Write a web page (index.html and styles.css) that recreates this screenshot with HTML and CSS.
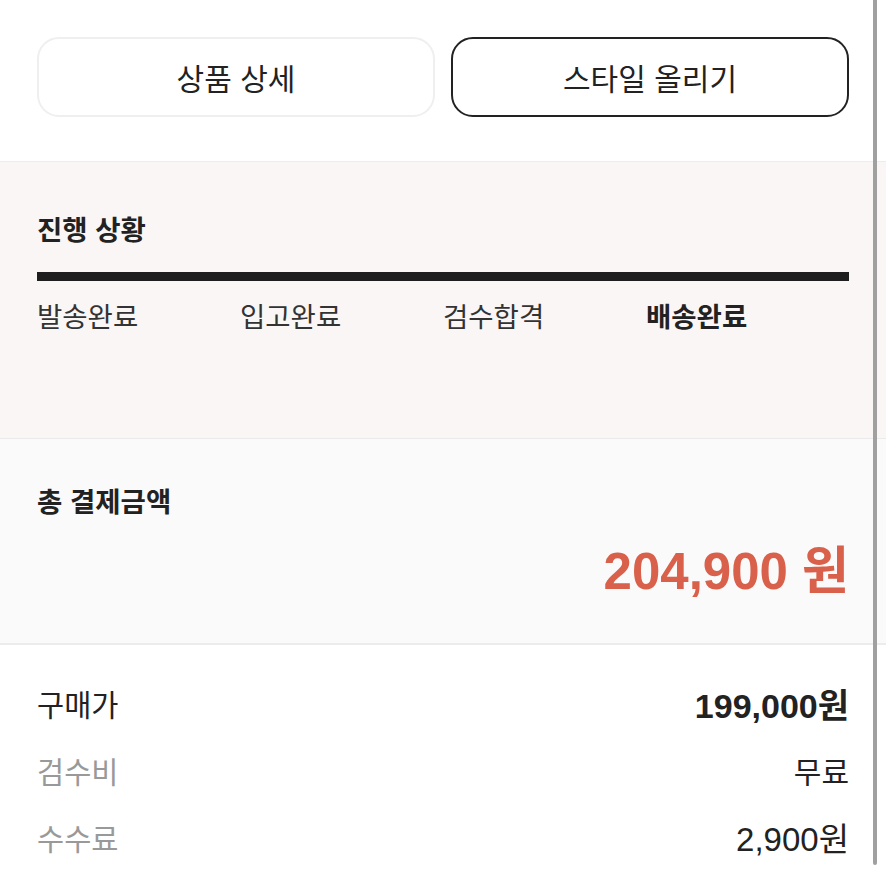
FILE: index.html
```html
<!DOCTYPE html>
<html lang="ko">
<head>
<meta charset="utf-8">
<link rel="stylesheet" href="styles.css">
</head>
<body>
<div class="page">
  <section class="top">
    <button class="btn btn-light">상품 상세</button>
    <button class="btn btn-dark">스타일 올리기</button>
  </section>
  <section class="progress">
    <h2 class="title">진행 상황</h2>
    <div class="bar"></div>
    <div class="steps">
      <span>발송완료</span>
      <span>입고완료</span>
      <span>검수합격</span>
      <span class="current">배송완료</span>
    </div>
  </section>
  <section class="total">
    <h2 class="title">총 결제금액</h2>
    <div class="price">204,900 원</div>
  </section>
  <section class="rows">
    <div class="row"><span class="label">구매가</span><span class="value strong">199,000원</span></div>
    <div class="row"><span class="label muted">검수비</span><span class="value ko">무료</span></div>
    <div class="row"><span class="label muted">수수료</span><span class="value">2,900원</span></div>
  </section>
</div>
<div class="scrollbar"></div>
</body>
</html>
```
FILE: styles.css
```css
html, body {
  margin: 0;
  padding: 0;
  background: #ffffff;
  height: 886px;
  overflow: hidden;
}
body {
  font-family: "Noto Sans CJK KR", "Noto Sans", sans-serif;
  color: #222;
}
.page {
  width: 886px;
}
.top {
  display: flex;
  gap: 16px;
  padding: 37px 37px 44px 37px;
  border-bottom: 1px solid #efecec;
}
.btn {
  flex: 1;
  height: 80px;
  border-radius: 22px;
  background: #fff;
  font-family: inherit;
  font-size: 30px;
  color: #222;
  box-sizing: border-box;
  padding: 0;
}
.btn-light {
  border: 2px solid #efefef;
}
.btn-dark {
  border: 2px solid #222;
}
.progress {
  background: #faf6f5;
  padding: 48px 37px 105px 37px;
  border-bottom: 1px solid #ebebeb;
}
.title {
  margin: 0;
  font-size: 27.5px;
  line-height: 36px;
  font-weight: 700;
  color: #222;
}
.bar {
  margin-top: 26px;
  height: 9px;
  background: #1e1e1e;
}
.steps {
  margin-top: 16px;
  display: grid;
  grid-template-columns: repeat(4, 1fr);
  font-size: 27.5px;
  line-height: 36px;
  color: #333;
}
.steps .current {
  font-weight: 700;
  color: #222;
}
.total {
  background: #fafafa;
  padding: 43px 37px 41px 37px;
  border-bottom: 2px solid #ececec;
}
.price {
  margin-top: 24px;
  text-align: right;
  font-family: "Liberation Sans", "Noto Sans CJK KR", sans-serif;
  font-size: 51px;
  line-height: 60px;
  font-weight: 700;
  color: #d9604b;
}
.rows {
  padding: 38px 37px 0 37px;
  display: flex;
  flex-direction: column;
  gap: 27px;
}
.row {
  display: flex;
  justify-content: space-between;
  align-items: center;
  height: 40px;
  font-size: 29.5px;
}
.label {
  color: #222;
}
.label.muted {
  color: #999;
}
.value {
  font-family: "Liberation Sans", "Noto Sans CJK KR", sans-serif;
  font-size: 33px;
  color: #222;
}
.value.strong {
  font-weight: 700;
  font-size: 34px;
}
.value.ko {
  font-size: 30px;
}
.scrollbar {
  position: fixed;
  top: 0;
  left: 873px;
  width: 4px;
  height: 865px;
  background: #a0a0a0;
  border-radius: 0 0 2px 2px;
}
```
